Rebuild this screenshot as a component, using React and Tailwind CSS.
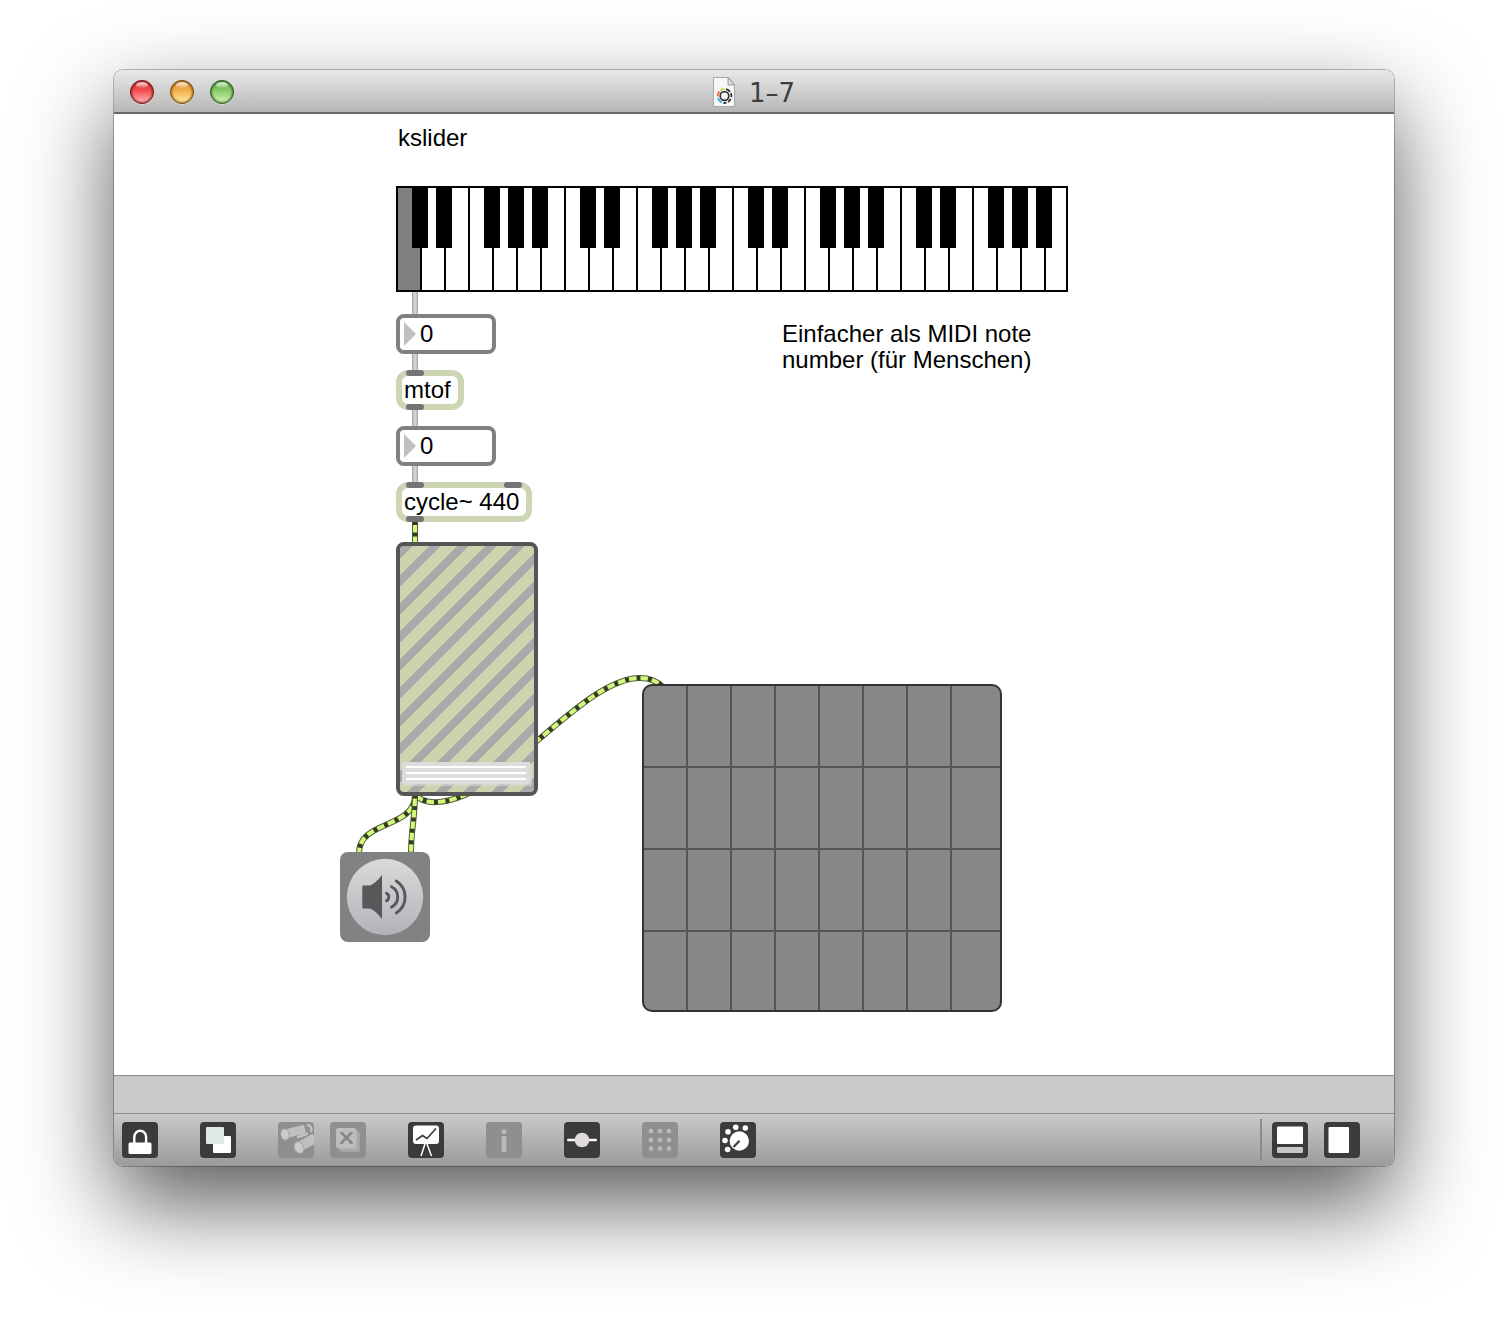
import React from "react";

const WHITE_KEYS = Array.from({ length: 28 }, (_, i) => i);
const HAS_SHARP = [true, true, false, true, true, true, false];

function Light({ id, dark, mid, low, ring }) {
  return (
    <svg className="h-7 w-7" viewBox="0 0 28 28">
      <defs>
        <linearGradient id={id} x1="0" y1="0" x2="0" y2="1">
          <stop offset="0" stopColor={dark} />
          <stop offset="0.45" stopColor={mid} />
          <stop offset="1" stopColor={low} />
        </linearGradient>
        <radialGradient id={id + "-edge"} cx="0.5" cy="0.5" r="0.5">
          <stop offset="0.72" stopColor={ring} stopOpacity="0" />
          <stop offset="1" stopColor={ring} stopOpacity="0.75" />
        </radialGradient>
        <linearGradient id={id + "-gloss"} x1="0" y1="0" x2="0" y2="1">
          <stop offset="0" stopColor="#fff" stopOpacity="0.9" />
          <stop offset="1" stopColor="#fff" stopOpacity="0.05" />
        </linearGradient>
      </defs>
      <circle cx="14" cy="14.8" r="12" fill="#fff" fillOpacity="0.45" />
      <circle cx="14" cy="14" r="11.6" fill={`url(#${id})`} />
      <circle cx="14" cy="14" r="11.6" fill={`url(#${id}-edge)`} stroke={ring} strokeWidth="0.9" />
      <ellipse cx="14" cy="7.2" rx="6" ry="3" fill={`url(#${id}-gloss)`} />
    </svg>
  );
}

function DocIcon() {
  return (
    <svg className="h-8 w-6" viewBox="0 0 24 32">
      <path d="M1.5 1.5h15l6 7v22h-21z" fill="#f7f7f7" stroke="#a8a8a8" />
      <path d="M16 1.5v7.5h6.5z" fill="#dcdcdc" stroke="#8e8e8e" strokeWidth="0.8" />
      <circle cx="12.5" cy="20" r="4.3" fill="none" stroke="#333" strokeWidth="1.7" />
      <g fill="none" strokeWidth="1.8">
        <path d="M8.5 14.2a7 7 0 0 1 4-1.3" stroke="#d3d11c" />
        <path d="M5.6 20.5a7 7 0 0 1 1.8-5.2" stroke="#f0652a" />
        <path d="M9.7 26.4a7 7 0 0 1-3.8-4.3" stroke="#26a9e0" />
        <path d="M14 13.2a7 7 0 0 1 4 2.7M18.9 17.2a7 7 0 0 1 .4 4M18.6 22.9a7 7 0 0 1-2.6 3M14.4 26.7a7 7 0 0 1-3 .2" stroke="#333" />
      </g>
    </svg>
  );
}

function TitleBar() {
  return (
    <header className="relative flex h-11 shrink-0 items-center justify-center border-b-2 border-[#686868] bg-gradient-to-b from-[#e9e9e9] to-[#b7b7b7]">
      <div className="absolute top-2 left-3.5 flex gap-3">
        <Light id="close" dark="#c9302f" mid="#f4504f" low="#ffc0c0" ring="#7d1a1a" />
        <Light id="minimize" dark="#d08a2c" mid="#f4b04a" low="#fff0b0" ring="#7d4e12" />
        <Light id="zoom" dark="#5da344" mid="#8acb68" low="#dcf6bf" ring="#2f5f1e" />
      </div>
      <div className="flex items-center gap-[13px] pt-0.5 pr-px">
        <DocIcon />
        <span className="pt-px font-['DejaVu_Sans'] text-[26px] leading-8 text-[#3e3e3e]">1–7</span>
      </div>
    </header>
  );
}

function Keyboard() {
  return (
    <div className="absolute top-[72px] left-[282px] flex h-[106px] w-[672px] border-2 border-black bg-white">
      {WHITE_KEYS.map((i) => (
        <div
          key={i}
          className={
            "relative h-full shrink-0 " +
            (i === 27 ? "w-[22px]" : "w-6 border-r-2 border-black") +
            (i === 0 ? " bg-[#808080]" : "")
          }
        >
          {HAS_SHARP[i % 7] && <div className="absolute top-0 left-3.5 z-10 h-[60px] w-4 bg-black" />}
        </div>
      ))}
    </div>
  );
}

function NumberBox({ place }) {
  return (
    <div className={"absolute left-[282px] flex h-10 w-[100px] items-center rounded-lg border-4 border-[#808080] bg-white pl-1 " + place}>
      <svg className="h-6 w-3" viewBox="0 0 12 24">
        <path d="M0 0l12 12L0 24z" fill="#c0c0c0" />
      </svg>
      <span className="pl-1 text-2xl leading-6">0</span>
    </div>
  );
}

function Port({ place }) {
  return <i className={"absolute h-1.5 w-[18px] rounded-[3px] bg-[#747474] " + place} />;
}

function ObjectBox({ label, place, children }) {
  return (
    <div className={"absolute left-[282px] flex h-10 items-center rounded-xl border-[6px] border-[#ccd5b4] bg-white pl-0.5 text-2xl leading-6 " + place}>
      <span className="whitespace-nowrap">{label}</span>
      <Port place="-top-1.5 left-1" />
      <Port place="-bottom-1.5 left-1" />
      {children}
    </div>
  );
}

function Signal({ d, offset = 3 }) {
  return (
    <g fill="none">
      <path d={d} stroke="#566040" strokeWidth="6" />
      <path d={d} stroke="#d2f97c" strokeWidth="4" />
      <path d={d} stroke="#343d20" strokeWidth="4.8" strokeDasharray="4 7.5" strokeDashoffset={offset} />
    </g>
  );
}

function Cords() {
  return (
    <svg className="absolute inset-0 h-full w-full" viewBox="114 114 1280 961">
      <g fill="none">
        <path d="M415 292v24M415 352v20M415 408v20M415 464v20" stroke="#a9a9a9" strokeWidth="6" />
        <path d="M415 292v24M415 352v20M415 408v20M415 464v20" stroke="#d2d2d2" strokeWidth="3.4" />
      </g>
      <Signal d="M415 521v24" offset={0} />
      <Signal d="M416 795C425 806 446 803 465 795C491 784 514 760 538 740C575 709 610 678 640 678C650 678 657 681 663 687" />
      <Signal d="M415 795C415 829 359 820 359 853" offset={-8} />
      <Signal d="M415 795C415 818 411 830 411 853" offset={-11} />
    </svg>
  );
}

function GainSlider() {
  return (
    <div className="absolute top-[428px] left-[282px] flex h-[254px] w-[142px] flex-col justify-end overflow-hidden rounded-lg border-4 border-[#555] bg-[#ccd3ae]">
      <svg className="absolute inset-0 h-full w-full" viewBox="0 0 134 246">
        <defs>
          <pattern id="stripes" width="28" height="28" patternUnits="userSpaceOnUse" patternTransform="translate(7 0)">
            <path d="M-7 7L7 -7M-7 35L35 -7M21 35L35 21" stroke="#a9a9a9" strokeWidth="8" />
          </pattern>
        </defs>
        <rect width="134" height="246" fill="url(#stripes)" />
      </svg>
      <div className="relative mb-2 ml-0.5 flex h-[22px] w-32 flex-col gap-1 bg-[#dcdcdc] px-1 pt-1 shadow-[2px_2px_0_rgba(220,220,220,0.6)]">
        <i className="h-0.5 bg-white" />
        <i className="h-0.5 bg-white" />
        <i className="h-0.5 bg-white" />
      </div>
    </div>
  );
}

function Speaker() {
  return (
    <svg className="absolute top-[738px] left-[226px] h-[90px] w-[90px]" viewBox="0 0 90 90">
      <defs>
        <linearGradient id="dac" x1="0" y1="0" x2="0" y2="1">
          <stop offset="0" stopColor="#dadada" />
          <stop offset="1" stopColor="#b3b2ba" />
        </linearGradient>
      </defs>
      <rect width="90" height="90" rx="8" fill="#828282" />
      <circle cx="45" cy="45" r="38.2" fill="url(#dac)" />
      <path d="M23.5 33.5H30Q36 31 42 23V67Q36 59 30 56.5H23.5Q22.3 56.5 22.3 55.3V34.7Q22.3 33.5 23.5 33.5z" fill="#56585a" />
      <g fill="none" stroke="#56585a" strokeWidth="2.9" strokeLinecap="round">
        <path d="M46.5 41.2a4.3 4.3 0 0 1 0 7.6" />
        <path d="M51.5 34.8a11.5 11.5 0 0 1 0 20.4" />
        <path d="M56.3 29a19 19 0 0 1 0 32" />
      </g>
    </svg>
  );
}

function MatrixGrid() {
  return (
    <div className="absolute top-[570px] left-[528px] grid h-[328px] w-[360px] grid-cols-[repeat(7,44px)_1fr] grid-rows-[82px_82px_82px_1fr] overflow-hidden rounded-[10px] border-2 border-[#333] bg-[#878787]">
      {Array.from({ length: 32 }, (_, i) => (
        <div
          key={i}
          className={
            "border-[#555] " + (i % 8 < 7 ? "border-r-2 " : "") + (i < 24 ? "border-b-2" : "")
          }
        />
      ))}
    </div>
  );
}

function Patcher() {
  return (
    <main className="relative h-[961px] shrink-0 bg-white font-['Liberation_Sans',sans-serif] text-2xl text-black">
      <Cords />
      <p className="absolute top-[11px] left-[284px] leading-[26px]">kslider</p>
      <Keyboard />
      <p className="absolute top-[207px] left-[668px] leading-[26px] whitespace-nowrap">
        Einfacher als MIDI note
        <br />
        number (für Menschen)
      </p>
      <NumberBox place="top-[200px]" />
      <ObjectBox label="mtof" place="top-[256px] w-[68px]" />
      <NumberBox place="top-[312px]" />
      <ObjectBox label="cycle~ 440" place="top-[368px] w-[136px]">
        <Port place="-top-1.5 right-1" />
      </ObjectBox>
      <GainSlider />
      <Speaker />
      <MatrixGrid />
    </main>
  );
}

function Tool({ off, children }) {
  return (
    <svg className="h-9 w-9" viewBox="0 0 36 36">
      <rect width="36" height="36" rx="4" fill={off ? "#8f8f8f" : "#3b3b3b"} />
      {children}
    </svg>
  );
}

function Toolbar() {
  return (
    <footer className="flex h-[53px] items-center border-t border-[#8a8a8a] bg-gradient-to-b from-[#cacaca] to-[#9b9b9b] px-2">
      <Tool>
        <path d="M12.3 22v-7.3a5.9 5.9 0 0 1 11.8 0v7.3" fill="none" stroke="#fff" strokeWidth="2.4" />
        <rect x="6.5" y="20.5" width="23" height="11.5" rx="1.5" fill="#fff" />
      </Tool>
      <div className="w-[42px]" />
      <Tool>
        <rect x="13" y="14" width="18" height="17" rx="1" fill="#fff" />
        <rect x="6" y="5" width="18" height="17" rx="1" fill="#dfe7e7" />
      </Tool>
      <div className="w-[42px]" />
      <Tool off>
        <path d="M7 12L27 7" stroke="#c0c0c0" strokeWidth="9" fill="none" />
        <path d="M21 25L37 16" stroke="#c0c0c0" strokeWidth="10" fill="none" />
        <ellipse cx="7" cy="12.5" rx="4.2" ry="5.6" fill="#cbcbcb" stroke="#a4a4a4" transform="rotate(-14 7 12.5)" />
        <ellipse cx="21" cy="25.5" rx="4.7" ry="6" fill="#cbcbcb" stroke="#a4a4a4" transform="rotate(-25 21 25.5)" />
        <path d="M19 15.5L30 11.5M29 3.2a4 4 0 0 1 3.5 6.5" stroke="#c0c0c0" strokeWidth="2.6" fill="none" />
        <path d="M27.5 5l2 4" stroke="#8f8f8f" strokeWidth="1.3" />
      </Tool>
      <div className="w-4" />
      <Tool off>
        <rect x="10" y="10" width="20" height="20" rx="2" fill="#a5a5a5" />
        <rect x="8" y="8" width="20" height="20" rx="2" fill="#aeaeae" />
        <rect x="6" y="6" width="20" height="20" rx="2" fill="#bdbdbd" />
        <path d="M11.5 10.8L22 21.2M21.5 10.8L11 21.2" stroke="#868686" strokeWidth="2.6" />
        <path d="M10 10.6h3.6M19.4 10.6H23M10 21.4h3.6M19.4 21.4H23" stroke="#8d8d8d" strokeWidth="1.2" />
      </Tool>
      <div className="w-[42px]" />
      <Tool>
        <rect x="5" y="3.5" width="26" height="18.5" rx="3" fill="#fff" />
        <path d="M8 18L14.5 13.5L19 16.5L28 6.5" fill="none" stroke="#3b3b3b" strokeWidth="1.7" />
        <path d="M17.3 21L13 34M18.7 21L23.5 34" stroke="#fff" strokeWidth="1.5" />
      </Tool>
      <div className="w-[42px]" />
      <Tool off>
        <rect x="15.5" y="7.5" width="5" height="4.4" rx="1.4" fill="#b9b9b9" />
        <rect x="15.5" y="14" width="5" height="16" rx="1.4" fill="#b9b9b9" />
      </Tool>
      <div className="w-[42px]" />
      <Tool>
        <path d="M4.3 18H31.7" stroke="#fff" strokeWidth="2.6" strokeLinecap="round" />
        <circle cx="18" cy="18" r="7.3" fill="#e2dadb" />
      </Tool>
      <div className="w-[42px]" />
      <Tool off>
        {[9, 18, 26.5].map((y) => [9, 18, 27].map((x) => (
          <rect key={x + "-" + y} x={x - 2.3} y={y - 2.3} width="4.6" height="4.6" rx="1.6" fill="#b8b8b8" />
        )))}
      </Tool>
      <div className="w-[42px]" />
      <Tool>
        <circle cx="19.3" cy="19" r="9.7" fill="#fff" />
        <path d="M19.5 18.7L13.5 25" stroke="#3b3b3b" strokeWidth="2.2" />
        <g fill="#fff">
          <circle cx="7.6" cy="27.5" r="2.8" />
          <circle cx="5" cy="18.5" r="2.8" />
          <circle cx="8" cy="9.8" r="2.8" />
          <circle cx="15.7" cy="5.3" r="2.8" />
          <circle cx="25.3" cy="6" r="2.8" />
        </g>
      </Tool>
      <div className="flex-1" />
      <div className="mr-2.5 h-[42px] w-0.5 bg-[#8b8b8b]" />
      <Tool>
        <rect x="5" y="4.5" width="26" height="17.5" rx="1" fill="#fff" />
        <rect x="5" y="25" width="26" height="6" rx="1" fill="#c6c6c6" />
      </Tool>
      <div className="w-4" />
      <Tool>
        <rect x="4.5" y="5" width="20.5" height="26" rx="1" fill="#fff" />
      </Tool>
      <div className="w-[26px]" />
    </footer>
  );
}

export default function App() {
  return (
    <div className="flex h-[1324px] w-[1508px] items-start overflow-hidden bg-white pt-[70px] pl-[114px]">
      <div className="rounded-[9px] shadow-[0_0_0_1px_rgba(0,0,0,0.25),0_38px_90px_rgba(0,0,0,0.65)]">
        <div className="flex h-[1096px] w-[1280px] flex-col overflow-hidden rounded-[9px]">
          <TitleBar />
          <Patcher />
          <div className="h-[38px] shrink-0 border-t border-[#8a8a8a] bg-[#c9c9c9]" />
          <Toolbar />
        </div>
      </div>
    </div>
  );
}
